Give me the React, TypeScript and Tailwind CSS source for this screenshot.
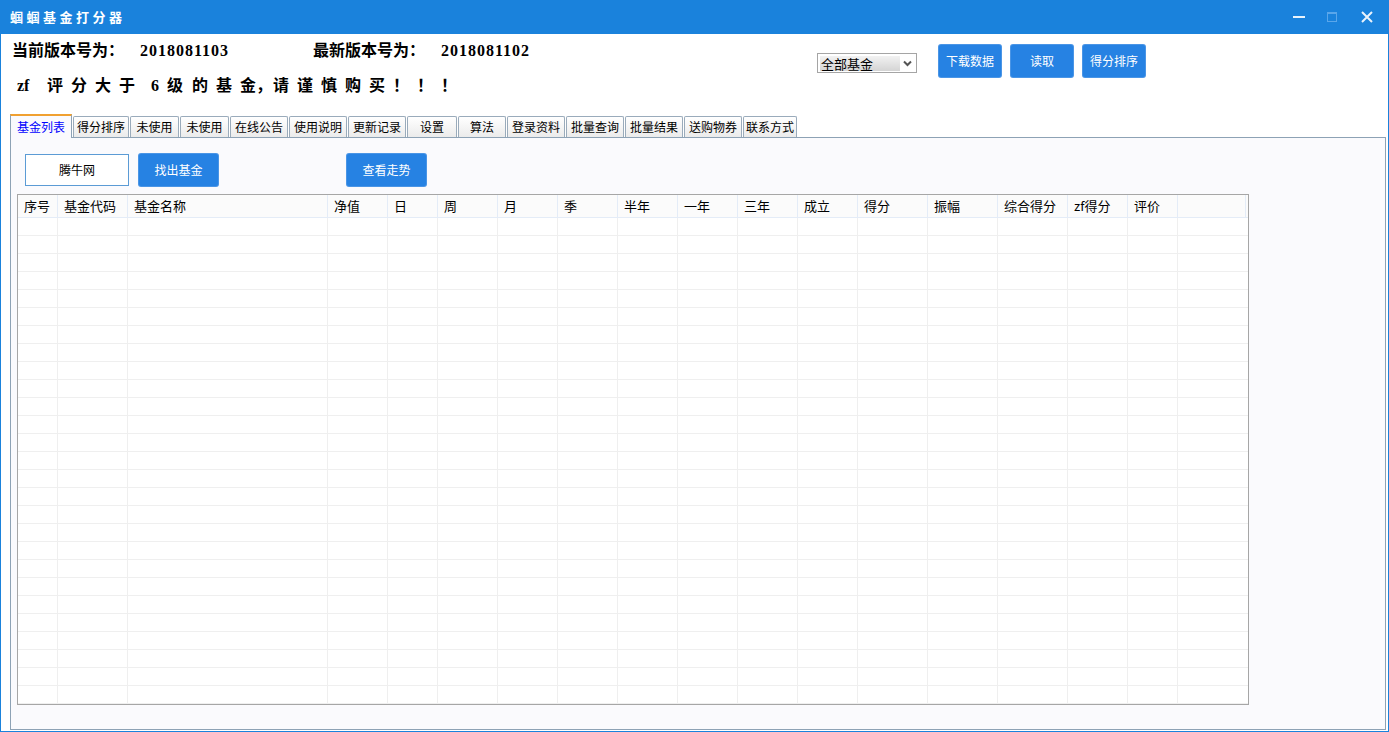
import React from "react";

const cjk = { fontFamily: '"Noto Sans CJK SC", "Liberation Sans", sans-serif' };
const serifCjk = { fontFamily: '"Liberation Serif", "Noto Sans CJK SC", serif' };

const tabs: { label: string; w: number }[] = [
  { label: "基金列表", w: 62 },
  { label: "得分排序", w: 56 },
  { label: "未使用", w: 49 },
  { label: "未使用", w: 49 },
  { label: "在线公告", w: 58 },
  { label: "使用说明", w: 58 },
  { label: "更新记录", w: 58 },
  { label: "设置", w: 50 },
  { label: "算法", w: 48 },
  { label: "登录资料", w: 58 },
  { label: "批量查询", w: 58 },
  { label: "批量结果", w: 58 },
  { label: "送购物券", w: 58 },
  { label: "联系方式", w: 54 },
];

const cols: string[] = [
  "序号",
  "基金代码",
  "基金名称",
  "净值",
  "日",
  "周",
  "月",
  "季",
  "半年",
  "一年",
  "三年",
  "成立",
  "得分",
  "振幅",
  "综合得分",
  "zf得分",
  "评价",
  "",
];

const gridCols =
  "grid grid-cols-[40px_70px_200px_60px_50px_60px_60px_60px_60px_60px_60px_60px_70px_70px_70px_60px_50px_1fr]";

const warn: { t: string; w: number; c?: boolean }[] = [
  { t: "zf", w: 30 },
  { t: "评", w: 24 },
  { t: "分", w: 24 },
  { t: "大", w: 24 },
  { t: "于", w: 24 },
  { t: "6", w: 24, c: true },
  { t: "级", w: 25 },
  { t: "的", w: 24 },
  { t: "基", w: 24 },
  { t: "金，", w: 33 },
  { t: "请", w: 24 },
  { t: "谨", w: 24 },
  { t: "慎", w: 24 },
  { t: "购", w: 24 },
  { t: "买", w: 24 },
  { t: "！", w: 24 },
  { t: "！", w: 24 },
  { t: "！", w: 24 },
];

function BlueButton({ label, w }: { label: string; w: string }) {
  return (
    <div
      className={`${w} h-[32px] flex items-center justify-center bg-[#2682e3] text-white text-[12px] rounded-[2px] shadow-[0_0_0_1px_#4a95e6]`}
      style={cjk}
    >
      {label}
    </div>
  );
}

export default function App() {
  const rows = Array.from({ length: 27 });
  return (
    <div className="w-[1389px] h-[732px] flex flex-col bg-white overflow-hidden">
      {/* Title bar */}
      <div className="h-[34px] shrink-0 bg-[#1a82dc] flex items-center justify-between">
        <div
          className="pl-[10px] text-white text-[13px] font-bold tracking-[3.5px]"
          style={cjk}
        >
          蝈蝈基金打分器
        </div>
        <div className="flex items-center h-full">
          <div className="w-[40px] h-full flex items-center justify-center">
            <div className="w-[12px] h-[2px] bg-white/90" />
          </div>
          <div className="w-[26px] h-full flex items-center justify-center">
            <div className="w-[10px] h-[10px] border border-[#5aa6ea] border-t-[2px]" />
          </div>
          <div className="w-[44px] h-full flex items-center justify-center">
            <svg width="12" height="12" viewBox="0 0 12 12">
              <path d="M1 1 L11 11 M11 1 L1 11" stroke="#eaf3fc" strokeWidth="2" />
            </svg>
          </div>
        </div>
      </div>

      {/* Body with window border */}
      <div className="flex-1 flex flex-col border-x border-b border-[#1a82dc]">
        {/* Header */}
        <div className="h-[80px] shrink-0 flex">
          <div className="w-[816px] shrink-0 flex flex-col pl-[11px]">
            <div className="mt-[8px] h-[18px] flex items-center text-[16px] font-bold text-black" style={serifCjk}>
              <span className="w-[128px]">当前版本号为：</span>
              <span className="w-[173px] tracking-[1px]">2018081103</span>
              <span className="w-[128px]">最新版本号为：</span>
              <span className="tracking-[1px]">2018081102</span>
            </div>
            <div className="mt-[17px] h-[18px] pl-[5px] flex items-center text-[16px] font-bold text-black" style={serifCjk}>
              {warn.map((t, i) => (
                <span
                  key={i}
                  className={`shrink-0 ${t.c ? "text-center" : ""}`}
                  style={{ width: t.w }}
                >
                  {t.t}
                </span>
              ))}
            </div>
          </div>
          <div className="flex items-start pt-[11px]">
            <div className="mt-[8px] w-[100px] h-[20px] border border-[#a5a5a5] bg-white flex items-center pl-[2px] pr-[4px]">
              <div
                className="w-[80px] h-[15px] bg-gradient-to-b from-[#f2f2f2] to-[#d4d4d4] text-[13px] leading-[15px] text-black pl-[1px]"
                style={cjk}
              >
                全部基金
              </div>
              <div className="flex-1 flex justify-end">
                <svg width="9" height="7" viewBox="0 0 9 7">
                  <path d="M1 1.5 L4.5 5 L8 1.5" stroke="#555" strokeWidth="2" fill="none" />
                </svg>
              </div>
            </div>
            <div className="ml-[22px] flex gap-[10px]">
              <BlueButton label="下载数据" w="w-[62px]" />
              <BlueButton label="读取" w="w-[62px]" />
              <BlueButton label="得分排序" w="w-[62px]" />
            </div>
          </div>
        </div>

        {/* Tabs + panel */}
        <div className="flex-1 flex flex-col pl-[9px] pr-[2px] pb-[1px]">
          <div className="h-[23px] shrink-0 flex items-end gap-[1px] relative z-10">
            {tabs.map((t, i) =>
              i === 0 ? (
                <div
                  key={i}
                  className="h-[24px] -mb-[1px] shrink-0 bg-[#fafafd] border-x border-[#8da2b5] border-t-[2px] border-t-[#f0a030] flex items-center justify-center text-[12px] text-[#0000ff]"
                  style={{ ...cjk, width: t.w }}
                >
                  {t.label}
                </div>
              ) : (
                <div
                  key={i}
                  className="h-[21px] shrink-0 border border-b-0 border-[#9aabbb] rounded-t-[2px] bg-gradient-to-b from-white to-[#ebebeb] flex items-center justify-center text-[12px] text-black"
                  style={{ ...cjk, width: t.w }}
                >
                  {t.label}
                </div>
              )
            )}
          </div>
          <div className="flex-1 border border-[#8da2b5] bg-[#fafafd] flex flex-col pl-[14px] pt-[16px]">
            <div className="flex items-center">
              <div
                className="w-[104px] h-[32px] border border-[#5b9bd5] bg-white flex items-center justify-center text-[12px] text-black"
                style={cjk}
              >
                腾牛网
              </div>
              <div className="ml-[10px]">
                <BlueButton label="找出基金" w="w-[79px]" />
              </div>
              <div className="ml-[129px]">
                <BlueButton label="查看走势" w="w-[79px]" />
              </div>
            </div>
            <div className="mt-[8px] -ml-[8px] w-[1232px] h-[511px] border border-[#a6a6a6] bg-white flex flex-col" style={cjk}>
              <div className={`${gridCols} h-[23px] bg-[#fbfbfb] border-b border-[#e4ecf7]`}>
                {cols.map((c, i) => (
                  <div
                    key={i}
                    className={`h-full flex items-center pl-[6px] text-[13px] text-black ${
                      i < cols.length - 1 ? "border-r border-[#e4ecf7]" : "mr-[2px] border-r border-[#e4ecf7]"
                    }`}
                  >
                    {c}
                  </div>
                ))}
              </div>
              {rows.map((_, r) => (
                <div key={r} className={`${gridCols} h-[18px] border-b border-[#efefef]`}>
                  {cols.map((_, i) => (
                    <div
                      key={i}
                      className={`h-full ${i < cols.length - 1 ? "border-r border-[#efefef]" : ""}`}
                    />
                  ))}
                </div>
              ))}
            </div>
          </div>
        </div>
      </div>
    </div>
  );
}
